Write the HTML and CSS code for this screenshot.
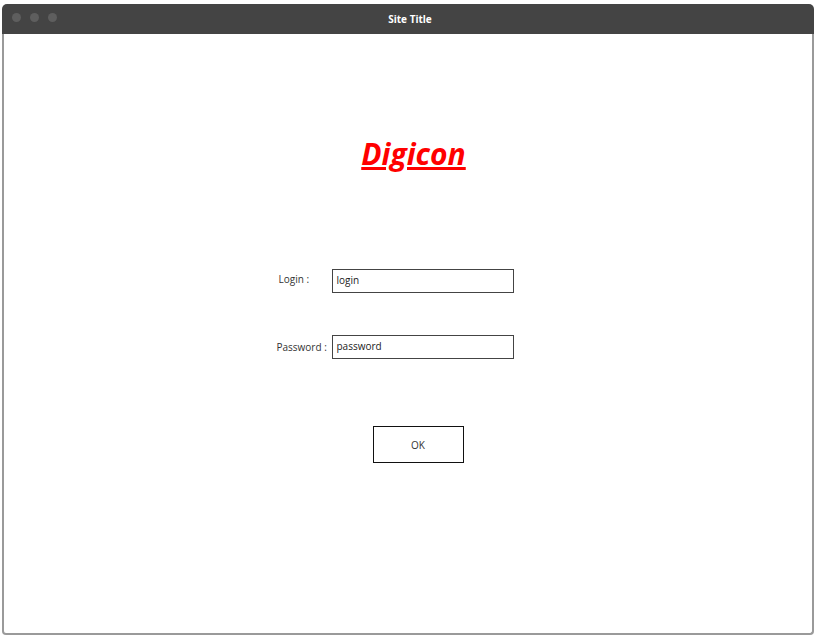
FILE: index.html
```html
<!DOCTYPE html>
<html>
<head>
<meta charset="utf-8">
<link rel="stylesheet" href="styles.css">
</head>
<body>
<div class="window">
  <div class="titlebar">
    <div class="dots"><span class="dot"></span><span class="dot"></span><span class="dot"></span></div>
    <div class="title">Site Title</div>
  </div>
  <div class="content">
    <h1 class="brand">Digicon</h1>
    <div class="form">
      <div class="row row-login">
        <label class="label label-login">Login :</label>
        <div class="input">login</div>
      </div>
      <div class="row row-pass">
        <label class="label">Password :</label>
        <div class="input">password</div>
      </div>
    </div>
    <div class="ok">OK</div>
  </div>
</div>
</body>
</html>
```

FILE: styles.css
```css
html, body { margin: 0; padding: 0; background: #fff; }
body { font-family: "Open Sans", "Noto Sans", sans-serif; }
.window {
  margin: 4px 3px 0 2px;
  width: 812px;
  height: 631px;
  display: flex;
  flex-direction: column;
}
.titlebar {
  height: 30px;
  background: #444;
  border-radius: 5px 5px 0 0;
  position: relative;
  display: flex;
  align-items: center;
  justify-content: center;
}
.dots {
  position: absolute;
  left: 10px;
  top: 9px;
  display: flex;
  gap: 9px;
}
.dot {
  width: 9px;
  height: 9px;
  border-radius: 50%;
  background: #5e5e5e;
}
.title {
  color: #fff;
  font-size: 10px;
  font-weight: 700;
  margin-left: 4px;
}
.content {
  flex: 1;
  border: 2px solid #9a9a9a;
  border-top: none;
  border-radius: 0 0 4px 4px;
  display: flex;
  flex-direction: column;
  align-items: center;
}
.brand {
  margin: 98px 0 0 11px;
  font-size: 30px;
  font-weight: 700;
  font-style: italic;
  color: #ff0000;
  text-decoration: underline;
  line-height: 44px;
}
.form {
  margin-top: 93px;
  display: flex;
  flex-direction: column;
  gap: 42px;
  margin-left: -26px;
}
.row {
  display: grid;
  grid-template-columns: 55px 182px;
  align-items: center;
}
.label {
  font-size: 10px;
  color: #333;
}
.label-login { margin-left: 2px; margin-top: -5px; }
.input {
  height: 24px;
  box-sizing: border-box;
  border: 1px solid #444;
  font-size: 10px;
  color: #222;
  padding: 0 4px;
  line-height: 21px;
}
.ok {
  margin-top: 67px;
  margin-left: 20px;
  width: 91px;
  height: 37px;
  box-sizing: border-box;
  border: 1px solid #111;
  font-size: 10px;
  color: #333;
  display: flex;
  align-items: center;
  justify-content: center;
}
```
